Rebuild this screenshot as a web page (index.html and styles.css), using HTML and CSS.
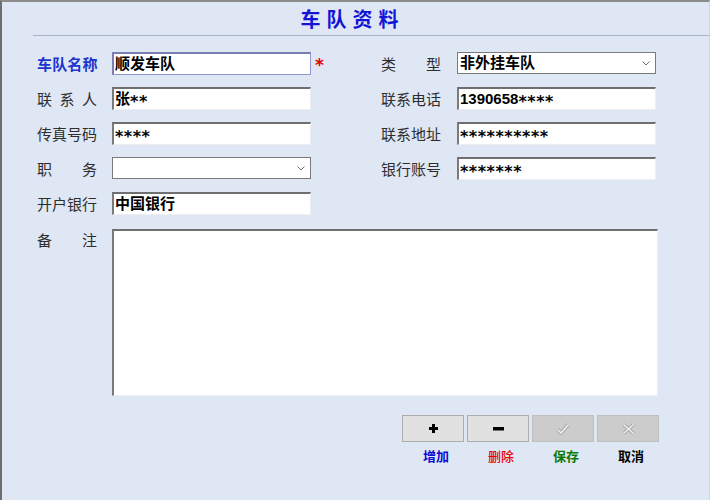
FILE: index.html
```html
<!DOCTYPE html>
<html lang="zh-CN">
<head>
<meta charset="utf-8">
<title>车队资料</title>
<link rel="stylesheet" href="styles.css">
</head>
<body>
<div class="window">
  <header class="head">
    <h1 class="title">车队资料</h1>
  </header>
  <div class="divider"></div>

  <form class="form">
    <label class="lbl lbl-req">车队名称</label>
    <div class="field field-focus">顺发车队</div>
    <div class="req-cell"><span class="req">*</span></div>
    <label class="lbl">类　型</label>
    <div class="select"><span class="sel-text">非外挂车队</span><svg class="chev" width="8" height="5" viewBox="0 0 8 5"><polyline points="0.5,0.5 4,4 7.5,0.5" fill="none" stroke="#6f6f6f" stroke-width="1"/></svg></div>

    <label class="lbl">联系人</label>
    <div class="field">张<span class="mask">**</span></div>
    <div></div>
    <label class="lbl">联系电话</label>
    <div class="field">1390658<span class="mask">****</span></div>

    <label class="lbl">传真号码</label>
    <div class="field"><span class="mask">****</span></div>
    <div></div>
    <label class="lbl">联系地址</label>
    <div class="field"><span class="mask">**********</span></div>

    <label class="lbl">职　务</label>
    <div class="select"><span class="sel-text"></span><svg class="chev" width="8" height="5" viewBox="0 0 8 5"><polyline points="0.5,0.5 4,4 7.5,0.5" fill="none" stroke="#6f6f6f" stroke-width="1"/></svg></div>
    <div></div>
    <label class="lbl">银行账号</label>
    <div class="field"><span class="mask">*******</span></div>

    <label class="lbl">开户银行</label>
    <div class="field">中国银行</div>
    <div></div>
    <div></div>
    <div></div>

    <label class="lbl lbl-top">备　注</label>
    <div class="memo"></div>
  </form>

  <div class="actions">
    <div class="btns">
      <button class="btn" type="button"><svg width="9" height="9" viewBox="0 0 9 9"><path d="M3 0h3v3h3v3H6v3H3V6H0V3h3z" fill="#000"/></svg></button>
      <button class="btn" type="button"><svg width="11" height="4" viewBox="0 0 11 4"><rect x="0" y="0" width="11" height="3.5" fill="#000"/></svg></button>
      <button class="btn btn-off" type="button"><svg width="14" height="12" viewBox="0 0 14 12"><polyline points="1.5,6.5 5,10 12.5,1.5" fill="none" stroke="#a9a9a9" stroke-width="3.6" stroke-linejoin="miter"/><polyline points="1.5,6.5 5,10 12.5,1.5" fill="none" stroke="#eeeeee" stroke-width="1.6" stroke-linejoin="miter"/></svg></button>
      <button class="btn btn-off" type="button"><svg width="13" height="12" viewBox="0 0 13 12"><path d="M1.5,1.5 L11.5,10.5 M11.5,1.5 L1.5,10.5" fill="none" stroke="#a9a9a9" stroke-width="3.6"/><path d="M1.5,1.5 L11.5,10.5 M11.5,1.5 L1.5,10.5" fill="none" stroke="#eeeeee" stroke-width="1.6"/></svg></button>
    </div>
    <div class="btn-labels">
      <span class="bl bl-add">增加</span>
      <span class="bl bl-del">删除</span>
      <span class="bl bl-save">保存</span>
      <span class="bl bl-cancel">取消</span>
    </div>
  </div>
</div>
</body>
</html>
```

FILE: styles.css
```css
* { box-sizing: border-box; }
html, body { margin: 0; padding: 0; }
body {
  width: 710px;
  height: 500px;
  background: #dfe7f5;
  font-family: "Noto Sans CJK SC", "DejaVu Sans", sans-serif;
  overflow: hidden;
}
.window {
  width: 710px;
  height: 500px;
  background: #dfe7f5;
  border-left: 2px solid #6e6e6e;
  border-top: 2px solid #8c8c8c;
  border-right: 1px solid #cfd6e2;
}
.head {
  height: 33px;
  display: flex;
  justify-content: center;
  align-items: center;
}
.title {
  margin: 0 6px 0 0;
  font-size: 20px;
  font-weight: 700;
  color: #1414d6;
  letter-spacing: 6px;
  line-height: 1;
}
.divider {
  height: 1px;
  margin-left: 31px;
  background: #a9b3c6;
}
.form {
  display: grid;
  grid-template-columns: 75px 199px 70px 76px 199px;
  grid-template-rows: repeat(5, 23px) 169px;
  row-gap: 12px;
  padding: 16px 0 0 35px;
}
.lbl {
  font-size: 15px;
  color: #2e2e2e;
  line-height: 23px;
  width: 60px;
  text-align: justify;
  text-align-last: justify;
  white-space: nowrap;
}
.lbl-req {
  color: #1c34d0;
  font-weight: 700;
  letter-spacing: -0.5px;
}
.lbl-top {
  line-height: 26px;
}
.field {
  background: #fff;
  border-top: 2px solid #6f6f6f;
  border-left: 2px solid #7a7a7a;
  border-right: 1px solid #eeeeee;
  border-bottom: 1px solid #eeeeee;
  font-family: "Liberation Sans", "Noto Sans CJK SC", sans-serif;
  font-weight: 700;
  font-size: 15px;
  color: #000;
  line-height: 19px;
  padding-left: 1px;
  white-space: nowrap;
  overflow: hidden;
}
.mask {
  font-family: "DejaVu Sans", sans-serif;
  vertical-align: -3px;
  font-size: 16px;
  letter-spacing: 0.5px;
}
.field-focus {
  border-top: 2px solid #7d7db6;
  border-left: 2px solid #7d7db6;
  border-right: 1px solid #9696cf;
  border-bottom: 1px solid #9696cf;
}
.req-cell {
  padding-left: 4px;
}
.req {
  color: #e00000;
  font-family: "DejaVu Sans", sans-serif;
  font-weight: 700;
  font-size: 17px;
  line-height: 18px;
}
.select {
  background: #fff;
  border: 1px solid #7a7a7a;
  display: flex;
  align-items: center;
  justify-content: space-between;
  padding: 0 5px 0 2px;
  height: 22px;
}
.sel-text {
  font-family: "Liberation Sans", "Noto Sans CJK SC", sans-serif;
  font-weight: 700;
  font-size: 15px;
  color: #000;
  line-height: 20px;
}
.chev { display: block; margin-top: 1px; }
.memo {
  grid-column: 2 / 6;
  width: 546px;
  height: 167px;
  margin-top: 2px;
  background: #fff;
  border-top: 2px solid #6f6f6f;
  border-left: 2px solid #7a7a7a;
  border-right: 1px solid #eeeeee;
  border-bottom: 1px solid #eeeeee;
}
.actions {
  margin: 19px 0 0 400px;
  width: 258px;
}
.btns {
  display: grid;
  grid-template-columns: repeat(4, 62px);
  column-gap: 3px;
}
.btn {
  height: 27px;
  margin: 0;
  padding: 0;
  background: #e1e1e1;
  border: 1px solid #adadad;
  display: flex;
  align-items: center;
  justify-content: center;
}
.btn svg { display: block; }
.btn-off {
  background: #cccccc;
  border-color: #bfbfbf;
}
.btn-labels {
  display: grid;
  grid-template-columns: repeat(4, 62px);
  column-gap: 3px;
  margin-top: 6px;
}
.bl {
  text-align: center;
  padding-left: 6px;
  font-size: 13px;
  font-weight: 700;
  line-height: 16px;
}
.bl-add { color: #0a0ad0; }
.bl-del { color: #e60000; font-weight: 500; }
.bl-save { color: #0b7a0b; }
.bl-cancel { color: #000; }
```
